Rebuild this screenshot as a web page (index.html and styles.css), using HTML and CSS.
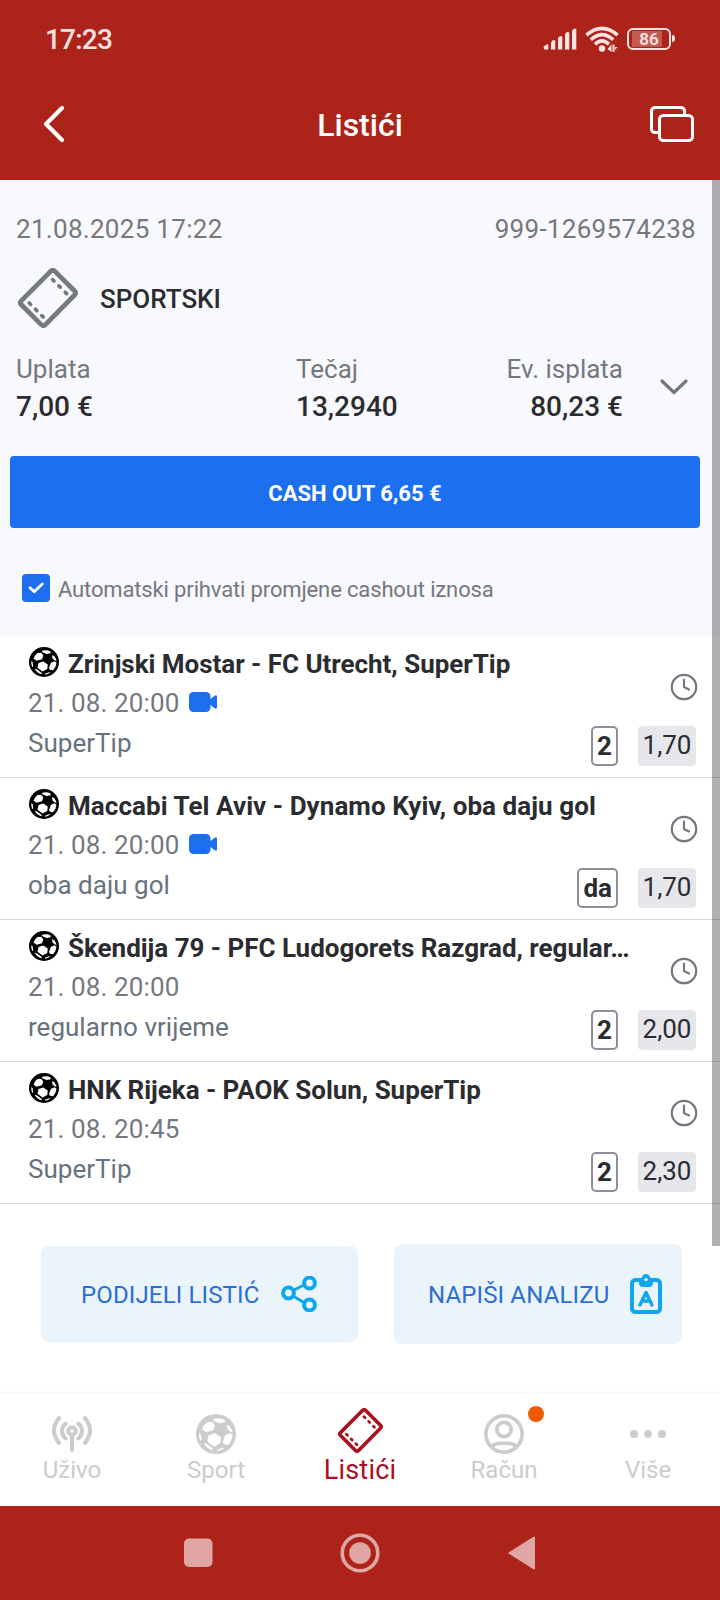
FILE: index.html
```html
<!DOCTYPE html>
<html lang="hr">
<head>
<meta charset="utf-8">
<title>Listići</title>
<link rel="stylesheet" href="styles.css">
</head>
<body>
<svg class="defs" aria-hidden="true">
  <symbol id="ball" viewBox="0 0 120 120">
    <circle cx="60" cy="60" r="60" fill="currentColor"/>
    <g fill="#fff">
      <path d="M51 16Q68 9 86 18L87 25L70 28L54 21Z"/>
      <path d="M34 24L49 23L57 34L52 49L30 55L18 46Q22 32 34 24Z"/>
      <path d="M38 64L57 58L75 70L73 88L54 98L34 83Z"/>
      <path d="M92 33L101 36Q108 46 110 56L104 54L94 46Z"/>
      <path d="M88 63L102 57L110 63Q108 82 96 93L84 91L80 84Z"/>
      <path d="M9 56L14 61L17 78L13 80Q8 68 9 56Z"/>
      <path d="M22 86L34 91L51 104L50 109Q32 104 22 86Z"/>
      <path d="M64 107L80 101L86 101Q76 110 64 111Z"/>
    </g>
  </symbol>
  <symbol id="ticket" viewBox="0 0 60 60">
    <g fill="none" stroke="currentColor" stroke-linecap="round" stroke-linejoin="round">
      <path stroke-width="4.8" d="M32.6 3.4Q34.8 1.2 37 3.4L56.6 23Q58.6 25 56.6 27L27.4 56.6Q25.2 58.6 23 56.4L3.4 36.8Q1.4 34.8 3.4 32.6Z"/>
      <path stroke-width="3.7" d="M34.6 11.6L36 13M40.9 17.9L42.3 19.3M47.2 24.2L48.6 25.6M11.2 35L12.6 36.4M17.5 41.3L18.900 42.7M23.8 47.6L25.2 49"/>
    </g>
  </symbol>
  <symbol id="camera" viewBox="0 0 28 20">
    <rect width="21.5" height="20" rx="4.5" fill="currentColor"/>
    <path fill="currentColor" d="M20 8.2L25.6 3.8Q28 2.4 28 5V15Q28 17.6 25.6 16.2L20 11.8Z"/>
  </symbol>
  <symbol id="clock" viewBox="0 0 28 28">
    <g fill="none" stroke="currentColor" stroke-width="2.2" stroke-linecap="round" stroke-linejoin="round">
      <circle cx="14" cy="14" r="12.2"/><path d="M14 6.5V14L19 16.5"/>
    </g>
  </symbol>
</svg>

<div class="screen">
  <div class="statusbar">
    <span class="time">17:23</span>
    <div class="indicators">
      <svg width="34" height="22" viewBox="0 0 34 22" fill="currentColor"><path d="M1 18.500L3.500 16.500Q5.300 15.500 5.300 17.500V21.500H1.500Q0 20 1 18.500Z"/><path d="M8 14.500Q10 11 12.300 12.500V21.500H8Z"/><path d="M15 10Q17 7 19.300 8.500V21.500H15Z"/><path d="M22 6Q24 3 26.300 4.500V21.500H22Z"/><path d="M29 3Q31 -.5 33.300 1V21.500H29Z"/></svg>
      <svg class="wifi" width="34" height="27" viewBox="0 0 34 27"><g fill="none" stroke="currentColor" stroke-width="3.6"><path d="M1.400 9.200Q17 -4.500 32.600 9.200"/><path d="M5.800 13.800Q17 3.500 28.200 13.800"/><path d="M10 18.200Q17 11.500 24 18.200"/></g><circle cx="17" cy="22.500" r="3.200"/><path d="M22.500 23L26.500 18.500V26Z M27.500 18.500H29.500V26H27.500Z M30 21H32.500L30 24Z"/></svg>
      <div class="battery"><span class="level"></span><span class="percent">86</span></div>
    </div>
  </div>

  <header class="header">
    <svg width="24" height="40" viewBox="0 0 24 40" fill="none" stroke="currentColor" stroke-width="4.200" stroke-linecap="round" stroke-linejoin="round"><path d="M20 4L4 20L20 36"/></svg>
    <h1>Listići</h1>
    <svg width="44" height="36" viewBox="0 0 44 36" fill="none" stroke="currentColor" stroke-width="3"><rect x="9.500" y="9.500" width="33" height="25" rx="4"/><path d="M9 26.500H5.500Q1.500 26.500 1.500 22.500V5.500Q1.500 1.500 5.500 1.500H30.500Q34.500 1.500 34.500 5.500V9"/></svg>
  </header>

  <main class="content">
    <section class="slip">
      <div class="meta"><span>21.08.2025 17:22</span><span class="slip-id">999-1269574238</span></div>
      <div class="kind"><svg width="60" height="60"><use href="#ticket"/></svg><span>SPORTSKI</span></div>
      <div class="amounts">
        <div class="amount"><span class="label">Uplata</span><b>7,00 €</b></div>
        <div class="amount"><span class="label">Tečaj</span><b>13,2940</b></div>
        <div class="amount payout"><span class="label">Ev. isplata</span><b>80,23 €</b></div>
        <svg class="expand" width="28" height="16" viewBox="0 0 28 16" fill="none" stroke="currentColor" stroke-width="3.200" stroke-linecap="round" stroke-linejoin="round"><path d="M2 2L14 13.500L26 2"/></svg>
      </div>
      <button class="cashout">CASH OUT 6,65 €</button>
      <div class="auto">
        <span class="check"><svg width="28" height="28" viewBox="0 0 28 28" fill="none" stroke="currentColor" stroke-width="2.800" stroke-linecap="round" stroke-linejoin="round"><path d="M8 13.700L12.200 17.800L20.300 10"/></svg></span>
        <span class="auto-label">Automatski prihvati promjene cashout iznosa</span>
      </div>
    </section>

    <section class="bets">
      <article class="bet">
        <div class="info">
          <h2><svg width="30" height="30"><use href="#ball"/></svg><span>Zrinjski Mostar - FC Utrecht, SuperTip</span></h2>
          <p class="when">21. 08. 20:00 <svg width="28" height="20"><use href="#camera"/></svg></p>
          <p class="market">SuperTip</p>
        </div>
        <div class="side"><svg class="clock" width="28" height="28"><use href="#clock"/></svg><div class="picks"><b class="pick">2</b><span class="odds">1,70</span></div></div>
      </article>
      <article class="bet">
        <div class="info">
          <h2><svg width="30" height="30"><use href="#ball"/></svg><span class="loose">Maccabi Tel Aviv - Dynamo Kyiv, oba daju gol</span></h2>
          <p class="when">21. 08. 20:00 <svg width="28" height="20"><use href="#camera"/></svg></p>
          <p class="market">oba daju gol</p>
        </div>
        <div class="side"><svg class="clock" width="28" height="28"><use href="#clock"/></svg><div class="picks"><b class="pick">da</b><span class="odds">1,70</span></div></div>
      </article>
      <article class="bet">
        <div class="info">
          <h2><svg width="30" height="30"><use href="#ball"/></svg><span>Škendija 79 - PFC Ludogorets Razgrad, regular…</span></h2>
          <p class="when">21. 08. 20:00</p>
          <p class="market">regularno vrijeme</p>
        </div>
        <div class="side"><svg class="clock" width="28" height="28"><use href="#clock"/></svg><div class="picks"><b class="pick">2</b><span class="odds">2,00</span></div></div>
      </article>
      <article class="bet">
        <div class="info">
          <h2><svg width="30" height="30"><use href="#ball"/></svg><span>HNK Rijeka - PAOK Solun, SuperTip</span></h2>
          <p class="when">21. 08. 20:45</p>
          <p class="market">SuperTip</p>
        </div>
        <div class="side"><svg class="clock" width="28" height="28"><use href="#clock"/></svg><div class="picks"><b class="pick">2</b><span class="odds">2,30</span></div></div>
      </article>
    </section>

    <div class="actions">
      <button class="action share"><span>PODIJELI LISTIĆ</span>
        <svg width="36" height="36" viewBox="0 0 36 36" fill="none" stroke="currentColor"><path stroke-width="3" d="M12 14.500L23 9M12 20L23 26.500"/><g stroke-width="4"><circle cx="7.500" cy="17" r="5.400"/><circle cx="28.500" cy="7" r="5.400"/><circle cx="28.500" cy="29" r="5.400"/></g></svg>
      </button>
      <button class="action analyze"><span>NAPIŠI ANALIZU</span>
        <svg width="32" height="40" viewBox="0 0 32 40"><rect x="2" y="6" width="28" height="32" rx="3.500" fill="none" stroke="currentColor" stroke-width="4"/><path fill="currentColor" d="M9 4H11.500Q13 0 16 0Q19 0 20.500 4H23V9Q23 13 19 13H13Q9 13 9 9Z"/><circle cx="16" cy="5.600" r="1.700" fill="#eaf4fa"/><path fill="none" stroke="currentColor" stroke-width="3.400" stroke-linecap="round" stroke-linejoin="round" d="M10 31L16 18.500L22 31M12.500 27H19.500"/></svg>
      </button>
    </div>
    <div class="scrollbar"></div>
  </main>

  <nav class="tabs">
    <a class="tab"><span class="icon"><svg width="40" height="40" viewBox="0 0 40 40" fill="none" stroke="currentColor" stroke-width="4" stroke-linecap="round"><circle cx="20" cy="17" r="3.700"/><path d="M20 22V36M13.500 9.500Q6.500 17 13.500 24.500M26.500 9.500Q33.500 17 26.500 24.500M7 4Q-3 16.500 7 29M33 4Q43 16.500 33 29"/></svg></span><span>Uživo</span></a>
    <a class="tab"><span class="icon"><svg width="40" height="40"><use href="#ball"/></svg></span><span>Sport</span></a>
    <a class="tab active"><span class="icon"><svg width="45" height="45"><use href="#ticket"/></svg></span><span>Listići</span></a>
    <a class="tab"><span class="icon"><svg width="40" height="40" viewBox="0 0 40 40" fill="none" stroke="currentColor" stroke-width="3.700"><circle cx="20" cy="20" r="18.100"/><circle cx="20" cy="15.500" r="7.200"/><path stroke-width="3.600" d="M7 32.500Q12 29.300 16 29.300H24Q28 29.300 33 32.500"/></svg><i class="badge"></i></span><span>Račun</span></a>
    <a class="tab"><span class="icon"><svg width="40" height="40" viewBox="0 0 40 40" fill="currentColor"><circle cx="6" cy="20" r="4"/><circle cx="20" cy="20" r="4"/><circle cx="34" cy="20" r="4"/></svg></span><span>Više</span></a>
  </nav>

  <div class="sysnav">
    <svg width="30" height="40" viewBox="0 0 30 40" fill="currentColor"><rect x="1" y="5.500" width="28.500" height="28.500" rx="5"/></svg>
    <svg width="40" height="40" viewBox="0 0 40 40"><circle cx="20" cy="20" r="17.800" fill="none" stroke="currentColor" stroke-width="3.600"/><circle cx="20" cy="20" r="10.800" fill="currentColor"/></svg>
    <svg width="30" height="40" viewBox="0 0 30 40" fill="currentColor" stroke="currentColor" stroke-width="2" stroke-linejoin="round"><path d="M2.500 20L27 4.500V35.500Z"/></svg>
  </div>
</div>
</body>
</html>
```
FILE: styles.css
```css
* { box-sizing: border-box; }
body { margin: 0; background: #fff; font-family: Roboto, "Noto Sans", sans-serif; font-size: 26px; color: #2b2c30; }
svg { display: block; flex: none; }
h1, h2, p { margin: 0; }
button { border: 0; padding: 0; font: inherit; cursor: pointer; }
.defs { position: absolute; width: 0; height: 0; }
.screen { width: 720px; height: 1600px; display: flex; flex-direction: column; overflow: hidden; }

/* Status bar */
.statusbar { height: 78px; background: #ac2419; color: #fde2e0; display: flex; justify-content: space-between; align-items: center; padding: 0 45px; }
.time { font-size: 28px; font-weight: 500; line-height: 78px; letter-spacing: -.8px; padding-top: 2px; }
.indicators { display: flex; align-items: center; gap: 8px; }
.wifi { fill: currentColor; }
.battery { position: relative; width: 44px; height: 22px; border: 2px solid currentColor; border-radius: 6px; font-size: 17px; font-weight: 600; line-height: 18px; text-align: center; margin-right: 4px; }
.battery::after { content: ""; position: absolute; left: 43px; top: 5px; width: 3px; height: 7px; border-radius: 0 3px 3px 0; background: currentColor; }
.level { position: absolute; left: 3px; top: 1px; width: 30px; height: 16px; background: rgba(255, 255, 255, .25); }
.percent { position: relative; }

/* App header */
.header { height: 102px; background: #ac2419; color: #fff; display: grid; grid-template-columns: 44px 1fr 44px; align-items: center; padding: 0 26px 10px 42px; }
.header h1 { font-size: 32px; font-weight: 500; line-height: 44px; text-align: center; padding-top: 2px; margin-right: 16px; }

.content { height: 1214px; position: relative; }
.scrollbar { position: absolute; right: 0; top: 0; width: 8px; height: 1066px; background: rgba(0, 0, 0, .31); }

/* Slip summary */
.slip { height: 456px; background: #f8f9fc; padding: 29px 20px 0 10px; }
.meta { display: flex; justify-content: space-between; line-height: 40px; color: #757780; padding: 0 4px 0 6px; letter-spacing: .3px; }
.kind { display: flex; align-items: center; height: 60px; margin-top: 19px; padding-left: 8px; gap: 22px; font-weight: 500; }
.kind svg { color: #767882; }
.kind span { padding-top: 2px; }
.amounts { display: grid; grid-template-columns: 280px 170px 157px 1fr; margin-top: 21px; padding-left: 6px; height: 76px; }
.amount { display: flex; flex-direction: column; }
.amount .label { line-height: 40px; color: #757780; }
.amount b { font-size: 28px; font-weight: 500; line-height: 36px; }
.payout { align-items: flex-end; }
.expand { color: #757780; margin: 30px 0 0 37px; }
.cashout { display: block; width: 690px; height: 72px; margin-top: 31px; border-radius: 4px; background: #1c6fee; color: #fff; font-size: 22px; font-weight: 700; line-height: 72px; padding-top: 2px; }
.auto { display: flex; align-items: center; margin-top: 46px; padding-left: 12px; gap: 8px; height: 28px; font-size: 22px; color: #757780; }
.check { width: 28px; height: 28px; border-radius: 4px; background: #1c6fee; color: #fff; }
.auto-label { padding-top: 3px; letter-spacing: -.14px; }

/* Bets */
.bet { height: 142px; border-bottom: 1px solid #d9dadc; display: flex; padding: 8px 24px 0 28px; }
.info { flex: 1; min-width: 0; white-space: nowrap; }
.bet h2 { display: flex; align-items: center; gap: 9px; height: 40px; font-size: 26px; font-weight: 700; letter-spacing: -.03px; }
.bet h2 .loose { letter-spacing: .06px; }
.bet h2 svg { color: #000; margin: -4px 0 0 1px; }
.when { display: flex; align-items: center; gap: 9px; line-height: 38px; height: 38px; color: #757780; letter-spacing: .13px; }
.when svg { color: #1c6fee; margin-top: -2px; }
.market { line-height: 42px; color: #66727e; letter-spacing: .02px; }
.side { width: 130px; margin-left: -50px; display: flex; flex-direction: column; align-items: flex-end; padding-top: 29px; }
.clock { color: #757780; margin-right: -2px; }
.picks { display: flex; gap: 20px; margin-top: 25px; }
.pick { height: 40px; border: 2px solid #8f8d9b; border-radius: 5px; padding: 0 4px; line-height: 36px; }
.odds { height: 40px; width: 58px; text-align: center; border-radius: 4px; background: #e6e7eb; line-height: 38px; }

/* Actions */
.actions { display: flex; align-items: center; gap: 36px; padding: 40px 0 0 41px; }
.action { display: flex; align-items: center; justify-content: space-between; border-radius: 8px; background: #eaf4fa; color: #2b6ed6; font-size: 24px; letter-spacing: .14px; }
.action svg { color: #0fa7ec; }
.share { width: 317px; height: 96px; padding: 0 41px 0 40px; }
.analyze { width: 288px; height: 100px; padding: 0 20px 0 34px; }
.action span { padding-top: 2px; }

/* Tab bar */
.tabs { position: relative; height: 112px; background: #fff; box-shadow: 0 -1px 4px rgba(0, 0, 0, .06); display: grid; grid-template-columns: repeat(5, 1fr); }
.tab { display: flex; flex-direction: column; align-items: center; padding-top: 12px; font-size: 24px; line-height: 34px; color: #ccc; }
.icon { position: relative; height: 46px; display: flex; align-items: center; margin-bottom: 1px; }
.icon svg { margin-top: 10px; }
.tab.active { font-size: 27px; color: #ac0f1c; letter-spacing: .2px; }
.tab.active .icon svg { margin-top: 2px; }
.badge { position: absolute; left: 44px; top: 0; width: 16px; height: 16px; border-radius: 50%; background: #f15a00; }

/* System navigation */
.sysnav { height: 94px; background: #ac2419; color: #dfa6a3; display: flex; align-items: center; justify-content: space-between; padding: 0 183px; }
```
